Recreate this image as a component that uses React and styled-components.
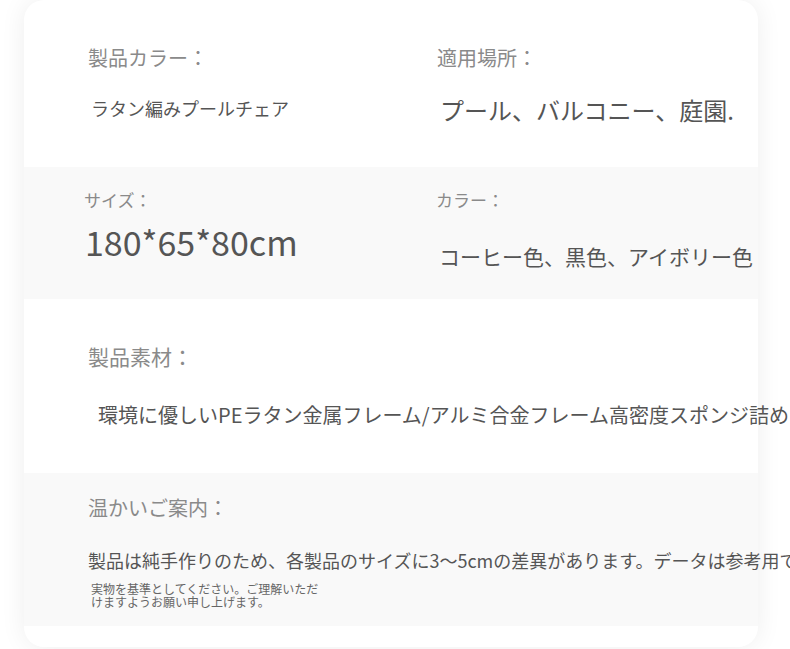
import React from 'react';
import styled, { createGlobalStyle } from 'styled-components';

const GlobalStyle = createGlobalStyle`
  html, body {
    margin: 0;
    padding: 0;
    background: #ffffff;
    overflow: hidden;
  }
  body {
    font-family: "Noto Sans CJK JP", "Noto Sans", sans-serif;
  }
`;

const Page = styled.div`
  width: 790px;
  height: 649px;
  padding: 0 32px 0 24px;
  box-sizing: border-box;
`;

const Card = styled.div`
  background: #ffffff;
  border-radius: 20px;
  box-shadow: 0 0 26px rgba(0, 0, 0, 0.07);
  padding-bottom: 21px;
`;

const Section = styled.section`
  box-sizing: border-box;
  height: ${p => p.h}px;
  padding-top: ${p => p.top}px;
  background: ${p => (p.shaded ? '#f9f9f9' : 'transparent')};
`;

const Columns = styled.div`
  display: grid;
  grid-template-columns: 412px 1fr;
`;

const Field = styled.div`
  display: flex;
  flex-direction: column;
  align-items: flex-start;
  padding-left: ${p => p.inset || 0}px;
`;

const Label = styled.div`
  font-size: ${p => p.size}px;
  line-height: 1.2;
  color: #8a8a8a;
  white-space: nowrap;
`;

const Value = styled.div`
  font-size: ${p => p.size}px;
  line-height: 1.2;
  color: #555555;
  white-space: nowrap;
  margin-top: ${p => p.gap}px;
  margin-left: ${p => p.indent || 0}px;
`;

const Note = styled.div`
  width: 232px;
  margin-top: ${p => p.gap}px;
  margin-left: 3px;
  font-size: 12px;
  line-height: 13px;
  color: #666666;
`;

export default function App() {
  return (
    <>
      <GlobalStyle />
      <Page>
        <Card>
          <Section h={167} top={46}>
            <Columns>
              <Field inset={64}>
                <Label size={20}>製品カラー：</Label>
                <Value size={18} gap={28} indent={3}>ラタン編みプールチェア</Value>
              </Field>
              <Field inset={1}>
                <Label size={20}>適用場所：</Label>
                <Value size={24} gap={26} indent={3}>プール、バルコニー、庭園.</Value>
              </Field>
            </Columns>
          </Section>

          <Section h={132} top={23} shaded>
            <Columns>
              <Field inset={60}>
                <Label size={17}>サイズ：</Label>
                <Value size={34} gap={12} indent={1}>180*65*80cm</Value>
              </Field>
              <Field inset={0}>
                <Label size={17}>カラー：</Label>
                <Value size={21} gap={34} indent={3}>コーヒー色、黒色、アイボリー色</Value>
              </Field>
            </Columns>
          </Section>

          <Section h={174} top={45}>
            <Field inset={64}>
              <Label size={21}>製品素材：</Label>
              <Value size={20} gap={34} indent={10}>
                環境に優しいPEラタン金属フレーム/アルミ合金フレーム高密度スポンジ詰め
              </Value>
            </Field>
          </Section>

          <Section h={153} top={23} shaded>
            <Field inset={64}>
              <Label size={20}>温かいご案内：</Label>
              <Value size={18} gap={30}>
                製品は純手作りのため、各製品のサイズに3〜5cmの差異があります。データは参考用で
              </Value>
              <Note gap={10}>
                実物を基準としてください。ご理解いただけますようお願い申し上げます。
              </Note>
            </Field>
          </Section>
        </Card>
      </Page>
    </>
  );
}
